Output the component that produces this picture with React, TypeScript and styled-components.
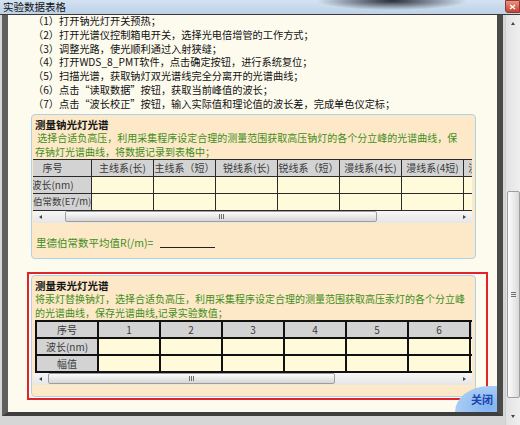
import styled, { createGlobalStyle } from "styled-components";

const GlobalStyle = createGlobalStyle`
  html, body {
    margin: 0;
    padding: 0;
  }
  body {
    width: 520px;
    height: 425px;
    overflow: hidden;
    background: #d6d6d6;
    font-family: "Noto Sans CJK SC", "Noto Sans", sans-serif;
  }
`;

const steps = [
  "（1）打开钠光灯开关预热；",
  "（2）打开光谱仪控制箱电开关，选择光电倍增管的工作方式；",
  "（3）调整光路，使光顺利通过入射狭缝；",
  "（4）打开WDS_8_PMT软件，点击确定按钮，进行系统复位；",
  "（5）扫描光谱，获取钠灯双光谱线完全分离开的光谱曲线；",
  "（6）点击“读取数据”按钮，获取当前峰值的波长；",
  "（7）点击“波长校正”按钮，输入实际值和理论值的波长差，完成单色仪定标；",
];

const sodiumHeads = [
  "主线系(长)",
  "主线系（短）",
  "锐线系(长)",
  "锐线系（短）",
  "漫线系(4长)",
  "漫线系(4短)",
  "漫线系(5长)",
  "漫线系(5短)",
];

const mercuryHeads = ["1", "2", "3", "4", "5", "6", "7", "8", "9"];

const Window = styled.div`
  width: 520px;
  height: 425px;
  display: flex;
  flex-direction: column;
  overflow: hidden;
`;

const TitleBar = styled.div`
  flex: none;
  height: 14px;
  display: flex;
  align-items: center;
  padding-left: 3px;
  border-bottom: 1px solid #3b3b3b;
  background:
    radial-gradient(ellipse 75px 9px at 392px 1px, rgba(22, 26, 34, 0.9), rgba(22, 26, 34, 0) 100%),
    linear-gradient(to bottom, #d4e2f1, #bdd1e7);
`;

const Title = styled.span`
  font-size: 10.5px;
  line-height: 14px;
  color: #111;
`;

const CloseBox = styled.div`
  margin-left: auto;
  width: 15px;
  height: 13px;
  align-self: flex-start;
  display: flex;
  align-items: center;
  justify-content: center;
  box-sizing: border-box;
  border: 1px solid #8c3a30;
  border-radius: 0 0 0 3px;
  background: linear-gradient(to bottom, #ec9283, #c8412f);
`;

const Body = styled.div`
  flex: 1;
  display: flex;
  min-height: 0;
`;

const Viewport = styled.div`
  flex: 1;
  display: flex;
  padding: 0 2px 9px 2px;
  background: #d6d6d6;
  min-width: 0;
`;

const Page = styled.div`
  position: relative;
  flex: 1;
  display: flex;
  flex-direction: column;
  overflow: hidden;
  background: #fdfbee;
  border-left: 6px solid #5f5f5f;
  border-right: 6px solid #4a4a4a;
  border-bottom: 4px solid #3e3e3e;
`;

const Steps = styled.div`
  margin: -1px 0 0 25px;
  font-size: 10.2px;
  line-height: 13.8px;
  color: #111;
  white-space: nowrap;
`;

const Section = styled.div<{ $top: number }>`
  margin: ${(p) => p.$top}px 0 0 23px;
  width: 445px;
  box-sizing: border-box;
  padding: 3px 3px 8px 1px;
  background: #fde9c8;
  border: 1px solid #a9d3e9;
  border-radius: 4px;
`;

const Framed = styled.div`
  margin: 13px 0 0 19px;
  width: 461px;
  box-sizing: border-box;
  padding: 1px 10px 1px 2px;
  border: 2px solid #e2232b;
  & > ${Section} {
    margin: 0;
    padding-bottom: 11px;
  }
`;

const SectionTitle = styled.div`
  padding-left: 2px;
  font-size: 10.5px;
  font-weight: 700;
  line-height: 13px;
  color: #141414;
`;

const Note = styled.div`
  padding-left: 2px;
  font-size: 10px;
  line-height: 14px;
  color: #3f8d22;
  white-space: nowrap;
`;

const TableClip = styled.div<{ $inset: number }>`
  margin-left: ${(p) => p.$inset}px;
  width: ${(p) => 439 - p.$inset}px;
  overflow: hidden;
`;

const DataTable = styled.table<{ $scroll: number; $width: number }>`
  margin-left: -${(p) => p.$scroll}px;
  width: ${(p) => p.$width}px;
  border-collapse: collapse;
  table-layout: fixed;
`;

const Row = styled.tr`
  height: 17px;
`;

const Cell = styled.td<{ $head?: boolean; $thin?: boolean; $left?: boolean }>`
  padding: 0;
  border: ${(p) => (p.$thin ? "1.5px solid #2a2a2a" : "2px solid #111")};
  background: ${(p) => (p.$head ? "#d3d3d3" : "#fffbda")};
  color: #3a3a3a;
  font-size: ${(p) => (p.$left ? "9.5px" : "10px")};
  line-height: 13px;
  text-align: ${(p) => (p.$left ? "left" : "center")};
  white-space: nowrap;
  overflow: hidden;
`;

const HScroll = styled.div`
  display: flex;
  height: 12px;
  background: linear-gradient(to bottom, #f6f6f6, #e6e6e6);
`;

const ArrowBtn = styled.div`
  flex: none;
  width: 15px;
  display: flex;
  align-items: center;
  justify-content: center;
`;

const Tri = styled.span<{ $dir: "left" | "right" | "up" | "down" }>`
  width: 0;
  height: 0;
  border: 2px solid transparent;
  ${(p) =>
    p.$dir === "left"
      ? "border-right: 3px solid #444; border-left-width: 0;"
      : p.$dir === "right"
      ? "border-left: 3px solid #444; border-right-width: 0;"
      : p.$dir === "up"
      ? "border-bottom: 3px solid #444; border-top-width: 0;"
      : "border-top: 3px solid #444; border-bottom-width: 0;"}
`;

const HTrack = styled.div`
  flex: 1;
  display: flex;
  align-items: center;
`;

const HThumb = styled.div<{ $offset: number; $size: number }>`
  margin-left: ${(p) => p.$offset}px;
  width: ${(p) => p.$size}px;
  height: 11px;
  box-sizing: border-box;
  display: flex;
  align-items: center;
  justify-content: center;
  gap: 1px;
  border: 1px solid #9e9e9e;
  border-radius: 2px;
  background: linear-gradient(to bottom, #fdfdfd, #e9e9e9 50%, #d6d6d6);
`;

const GripV = styled.span`
  width: 1px;
  height: 5px;
  background: #6f6f6f;
`;

const Result = styled.div`
  margin-top: 13px;
  padding-left: 3px;
  display: flex;
  align-items: center;
  font-size: 10.5px;
  line-height: 14px;
  color: #3f8d22;
`;

const Blank = styled.span`
  margin-left: 7px;
  width: 55px;
  height: 9px;
  border-bottom: 1px solid #222;
`;

const CloseButton = styled.div`
  position: absolute;
  right: 0;
  bottom: 0;
  width: 42px;
  height: 26px;
  display: flex;
  align-items: center;
  justify-content: flex-end;
  padding-right: 4px;
  box-sizing: border-box;
  border-radius: 34px 0 0 0 / 26px 0 0 0;
  background: radial-gradient(ellipse at 80% 80%, #7fb3f0, #a9cdf5 70%, #c4ddf7);
  font-size: 11px;
  font-weight: 700;
  color: #1c44b3;
`;

const VScroll = styled.div`
  flex: none;
  width: 15px;
  display: flex;
  flex-direction: column;
  background: linear-gradient(to right, #e2e2e2, #efefef);
  border-left: 1px solid #cfcfcf;
  box-sizing: border-box;
`;

const VArrow = styled.div`
  flex: none;
  height: 17px;
  display: flex;
  align-items: center;
  justify-content: center;
`;

const VTrack = styled.div`
  flex: 1;
  display: flex;
  flex-direction: column;
  align-items: center;
`;

const VThumb = styled.div`
  margin-top: 159px;
  width: 13px;
  height: 207px;
  box-sizing: border-box;
  display: flex;
  flex-direction: column;
  align-items: center;
  justify-content: center;
  gap: 1px;
  border: 1px solid #9e9e9e;
  border-radius: 2px;
  background: linear-gradient(to right, #fbfbfb, #ececec 50%, #d9d9d9);
`;

const GripH = styled.span`
  width: 5px;
  height: 1px;
  background: #6f6f6f;
`;

const Scrollbar = ({ offset, size }: { offset: number; size: number }) => (
  <HScroll>
    <ArrowBtn>
      <Tri $dir="left" />
    </ArrowBtn>
    <HTrack>
      <HThumb $offset={offset} $size={size}>
        <GripV />
        <GripV />
        <GripV />
      </HThumb>
    </HTrack>
    <ArrowBtn>
      <Tri $dir="right" />
    </ArrowBtn>
  </HScroll>
);

const App = () => {
  return (
    <Window>
      <GlobalStyle />
      <TitleBar>
        <Title>实验数据表格</Title>
        <CloseBox>
          <svg width="7" height="6" viewBox="0 0 7 6">
            <path d="M1 1 L6 5 M6 1 L1 5" stroke="#fff" strokeWidth="1.4" />
          </svg>
        </CloseBox>
      </TitleBar>
      <Body>
        <Viewport>
          <Page>
            <Steps>
              {steps.map((s) => (
                <div key={s}>{s}</div>
              ))}
            </Steps>

            <Section $top={3}>
              <SectionTitle>测量钠光灯光谱</SectionTitle>
              <Note>&nbsp;选择合适负高压，利用采集程序设定合理的测量范围获取高压钠灯的各个分立峰的光谱曲线，保</Note>
              <Note>存钠灯光谱曲线，将数据记录到表格中；</Note>
              <TableClip $inset={0}>
                <DataTable $scroll={20} $width={574}>
                  <colgroup>
                    <col style={{ width: 78 }} />
                    {sodiumHeads.map((h) => (
                      <col key={h} style={{ width: 62 }} />
                    ))}
                  </colgroup>
                  <tbody>
                    <Row>
                      <Cell $head $thin>序号</Cell>
                      {sodiumHeads.map((h) => (
                        <Cell key={h} $head $thin>
                          {h}
                        </Cell>
                      ))}
                    </Row>
                    <Row>
                      <Cell $head $thin>波长(nm)</Cell>
                      {sodiumHeads.map((h) => (
                        <Cell key={h} $thin />
                      ))}
                    </Row>
                    <Row>
                      <Cell $head $thin $left>
                        里德伯常数(E7/m)
                      </Cell>
                      {sodiumHeads.map((h) => (
                        <Cell key={h} $thin />
                      ))}
                    </Row>
                  </tbody>
                </DataTable>
              </TableClip>
              <Scrollbar offset={17} size={312} />
              <Result>
                里德伯常数平均值R(/m)=
                <Blank />
              </Result>
            </Section>

            <Framed>
              <Section $top={0}>
                <SectionTitle>测量汞光灯光谱</SectionTitle>
                <Note>将汞灯替换钠灯，选择合适负高压，利用采集程序设定合理的测量范围获取高压汞灯的各个分立峰</Note>
                <Note>的光谱曲线，保存光谱曲线,记录实验数值；</Note>
                <TableClip $inset={2}>
                  <DataTable $scroll={0} $width={620}>
                    <colgroup>
                      <col style={{ width: 62 }} />
                      {mercuryHeads.map((h) => (
                        <col key={h} style={{ width: 62 }} />
                      ))}
                    </colgroup>
                    <tbody>
                      <Row>
                        <Cell $head>序号</Cell>
                        {mercuryHeads.map((h) => (
                          <Cell key={h} $head>
                            {h}
                          </Cell>
                        ))}
                      </Row>
                      <Row>
                        <Cell $head>波长(nm)</Cell>
                        {mercuryHeads.map((h) => (
                          <Cell key={h} />
                        ))}
                      </Row>
                      <Row>
                        <Cell $head>幅值</Cell>
                        {mercuryHeads.map((h) => (
                          <Cell key={h} />
                        ))}
                      </Row>
                    </tbody>
                  </DataTable>
                </TableClip>
                <Scrollbar offset={0} size={287} />
              </Section>
            </Framed>

            <CloseButton>关闭</CloseButton>
          </Page>
        </Viewport>
        <VScroll>
          <VArrow>
            <Tri $dir="up" />
          </VArrow>
          <VTrack>
            <VThumb>
              <GripH />
              <GripH />
              <GripH />
            </VThumb>
          </VTrack>
          <VArrow>
            <Tri $dir="down" />
          </VArrow>
        </VScroll>
      </Body>
    </Window>
  );
};

export default App;
